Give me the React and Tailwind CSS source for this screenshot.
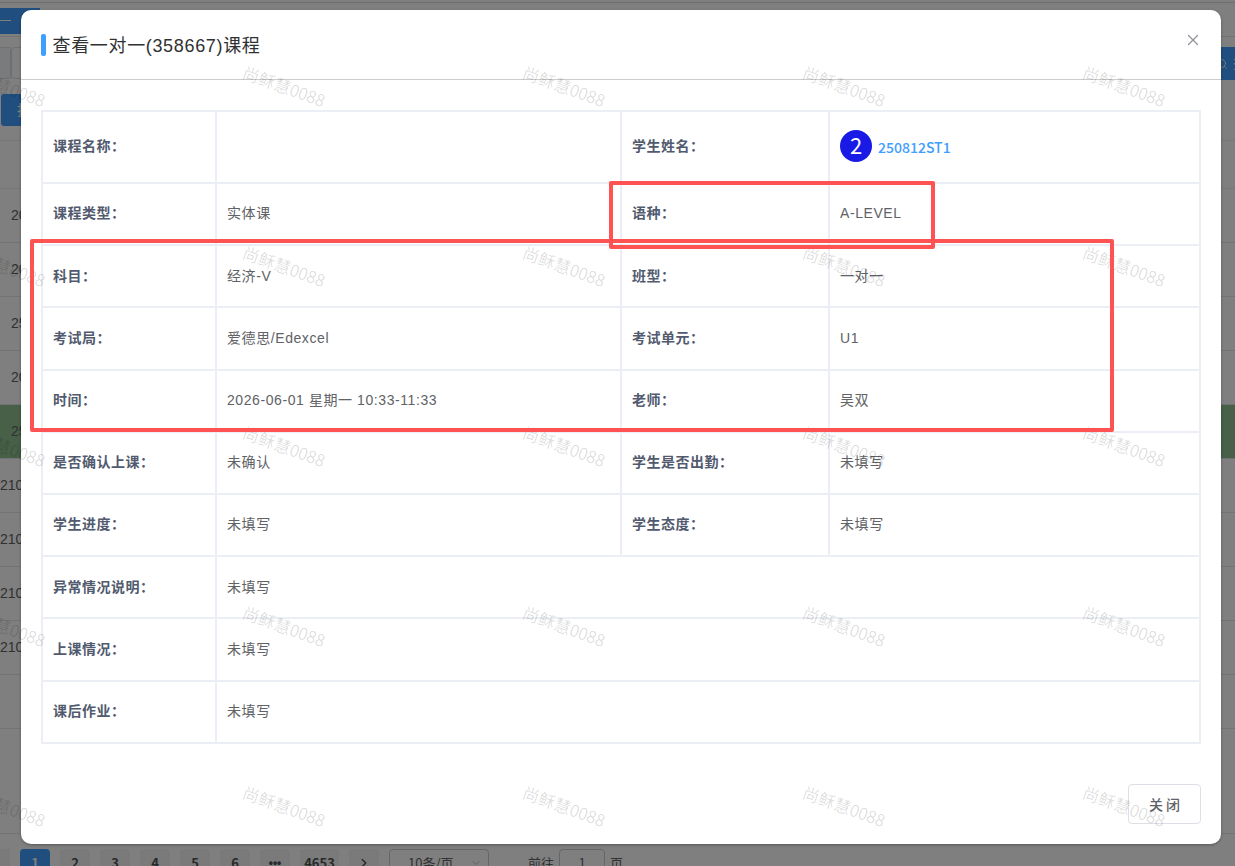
import { ChevronLeft, ChevronRight, ChevronDown, Search, X } from "lucide-react";

const ROWS = [
  { label: "课程类型", value: "实体课", label2: "语种", value2: "A-LEVEL" },
  { label: "科目", value: "经济-V", label2: "班型", value2: "一对一" },
  { label: "考试局", value: "爱德思/Edexcel", label2: "考试单元", value2: "U1" },
  { label: "时间", value: "2026-06-01 星期一 10:33-11:33", label2: "老师", value2: "吴双" },
  { label: "是否确认上课", value: "未确认", label2: "学生是否出勤", value2: "未填写" },
  { label: "学生进度", value: "未填写", label2: "学生态度", value2: "未填写" },
];

const WIDE_ROWS = [
  { label: "异常情况说明", value: "未填写" },
  { label: "上课情况", value: "未填写" },
  { label: "课后作业", value: "未填写" },
];

// visible part of the list behind the dialog
const LIST = [
  { id: "20", pad: true },
  { id: "20", pad: true },
  { id: "25", pad: true },
  { id: "20", pad: true },
  { id: "25", pad: true, active: true },
  { id: "210" },
  { id: "210" },
  { id: "210" },
  { id: "210" },
  { id: "" },
];

const PAGES = ["1", "2", "3", "4", "5", "6", "•••"];

const Label = ({ children }) => (
  <div className="flex items-center bg-white px-2.5 pb-[1.3px] font-bold text-[#515a6e]">{children}：</div>
);

const Value = ({ wide, children }) => (
  <div
    className={`flex items-center bg-white px-2.5 pb-[1.3px] tracking-[0.58px] text-[#606266] ${
      wide ? "col-span-3" : ""
    }`}
  >
    {children}
  </div>
);

const ListPage = () => (
  <div className="flex h-[866px] flex-col overflow-hidden bg-white text-sm text-[#606266]">
    <div className="h-[3px] shrink-0 border-b border-[#d8dce5]" />
    <div className="flex h-[34px] shrink-0 items-center border-b border-[#e4e7ed] pt-0.5">
      <div className="flex h-[26px] w-10 items-center bg-[#409eff] text-white">
        <span className="h-px w-[11px] bg-white" />
      </div>
    </div>
    <div className="flex h-[57px] shrink-0 items-start justify-between pt-2.5">
      <div className="flex h-8">
        <div className="w-[11px] border-y border-r border-[#dcdfe6] bg-[#f5f7fa]" />
        <div className="w-40 rounded border border-[#dcdfe6]" />
      </div>
      <div className="flex h-[33px] w-[30px] items-center gap-[5px] overflow-hidden bg-[#409eff] pl-[11px] text-white">
        <Search size={12} strokeWidth={1.6} className="shrink-0" />
        <span className="whitespace-nowrap">查询</span>
      </div>
    </div>
    <div className="flex h-[47px] shrink-0 items-start border-b border-[#ebeef5]">
      <button className="ml-px h-8 rounded-[3px] bg-[#409eff] px-4 text-white">批量</button>
    </div>
    <div className="h-12 shrink-0 border-b border-[#ebeef5]" />
    {LIST.map((row, i) => (
      <div
        key={i}
        className={`flex h-[54px] shrink-0 items-center border-b border-[#e4e7ed] pb-0.5 ${
          row.active ? "bg-[#8fc08f]" : ""
        } ${row.pad ? "pl-[11px]" : ""}`}
      >
        {row.id}
      </div>
    ))}
    <div className="h-[105px] shrink-0 border-b border-[#e4e7ed]" />
    <div className="flex shrink-0 gap-2.5 pt-[15px] font-['Noto_Sans_CJK_SC',sans-serif] text-[13px] text-[#505256]">
      <div className="-ml-5 flex h-7 w-[30px] items-center justify-center bg-[#f4f4f5]">
        <ChevronLeft size={14} />
      </div>
      {PAGES.map((p) => (
        <div
          key={p}
          className={`flex h-7 w-[30px] items-center justify-center rounded-sm font-bold ${
            p === "1" ? "bg-[#409eff] text-white" : "bg-[#f4f4f5]"
          } ${p === "•••" ? "font-['Liberation_Sans'] text-xs" : ""}`}
        >
          {p}
        </div>
      ))}
      <div className="flex h-7 w-[39px] items-center justify-center bg-[#f4f4f5] font-bold">4653</div>
      <div className="flex h-7 w-[30px] items-center justify-center bg-[#f4f4f5]">
        <ChevronRight size={14} strokeWidth={2.5} />
      </div>
      <div className="flex h-7 w-[100px] items-center justify-between rounded border border-[#c8ccd4] pr-1.5 pl-[18px] text-[#606266]">
        10条/页
        <ChevronDown size={12} className="text-[#c0c4cc]" />
      </div>
      <div className="ml-[29px] flex items-center gap-[5px] text-[#606266]">
        前往
        <div className="flex h-7 w-[46px] items-center justify-center rounded border border-[#c8ccd4]">1</div>
        页
      </div>
    </div>
  </div>
);

const Watermark = () => (
  <div className="pointer-events-none absolute -top-1 -left-[136px] grid grid-cols-[repeat(5,280px)] auto-rows-[180px]">
    {Array.from({ length: 25 }).map((_, i) => (
      <div key={i} className="flex items-center justify-center">
        <span className="rotate-[20deg] font-['Noto_Sans_CJK_SC',sans-serif] text-[16.6px] font-[350] whitespace-nowrap text-black/15">
          尚稣慧0088
        </span>
      </div>
    ))}
  </div>
);

const CourseDialog = () => (
  <div className="flex h-[834px] w-[1200px] flex-col rounded-[10px] bg-white shadow-[0_1px_3px_rgba(0,0,0,0.3)]">
    <div className="flex h-[70px] items-center justify-between border-b border-[#ccc] pr-5 pl-5">
      <div className="flex items-center gap-[6.5px]">
        <span className="h-[22px] w-[5px] rounded-[2px] bg-[#409eff]" />
        <h1 className="pt-0.5 text-lg tracking-[0.66px] text-[#303133]">查看一对一(358667)课程</h1>
      </div>
      <button className="-mr-px mb-[9px] text-[#909399]">
        <X size={18} strokeWidth={1.6} />
      </button>
    </div>

    <div className="mx-5 mt-[30px] grid h-[634px] grid-cols-[172px_403px_206px_369px] grid-rows-[70px_repeat(9,60.2px)] gap-0.5 bg-[#ebeef5] p-0.5 text-sm tracking-[0.5px]">
      <Label>课程名称</Label>
      <Value />
      <Label>学生姓名</Label>
      <div className="flex items-center gap-1.5 bg-white px-2.5 pb-0.5 font-['Noto_Sans_CJK_SC',sans-serif] tracking-normal">
        <span className="flex size-8 items-center justify-center rounded-full bg-[#1a1ae6] pb-0.5 text-[22px] text-white">
          2
        </span>
        <a className="pt-0.5 font-medium text-[#409eff]">250812ST1</a>
      </div>
      {ROWS.map((row) => [
        <Label key={row.label}>{row.label}</Label>,
        <Value key={row.label + "-v"}>{row.value}</Value>,
        <Label key={row.label2}>{row.label2}</Label>,
        <Value key={row.label2 + "-v"}>{row.value2}</Value>,
      ])}
      {WIDE_ROWS.map((row) => [
        <Label key={row.label}>{row.label}</Label>,
        <Value key={row.label + "-v"} wide>
          {row.value}
        </Value>,
      ])}
    </div>

    <div className="flex justify-end px-5 pt-10">
      <button className="h-10 w-[73px] rounded border border-[#dcdfe6] pl-[3px] font-['Noto_Sans_CJK_SC',sans-serif] text-sm font-medium tracking-[3px] text-[#606266]">
        关闭
      </button>
    </div>
  </div>
);

const App = () => {
  return (
    <div className="relative h-[866px] w-[1235px] overflow-hidden font-['Liberation_Sans','Noto_Sans_CJK_SC',sans-serif]">
      <ListPage />
      <div className="absolute inset-0 bg-black/50 pt-2.5 pl-[21px]">
        <CourseDialog />
      </div>
      <Watermark />
      {/* highlight frames */}
      <div className="absolute top-[239px] left-[30px] h-[193px] w-[1084px] rounded-[2px] border-4 border-[#ff5252]" />
      <div className="absolute top-[181px] left-[609px] h-[68px] w-[326px] rounded-[2px] border-4 border-[#ff5252]" />
    </div>
  );
};

export default App;
